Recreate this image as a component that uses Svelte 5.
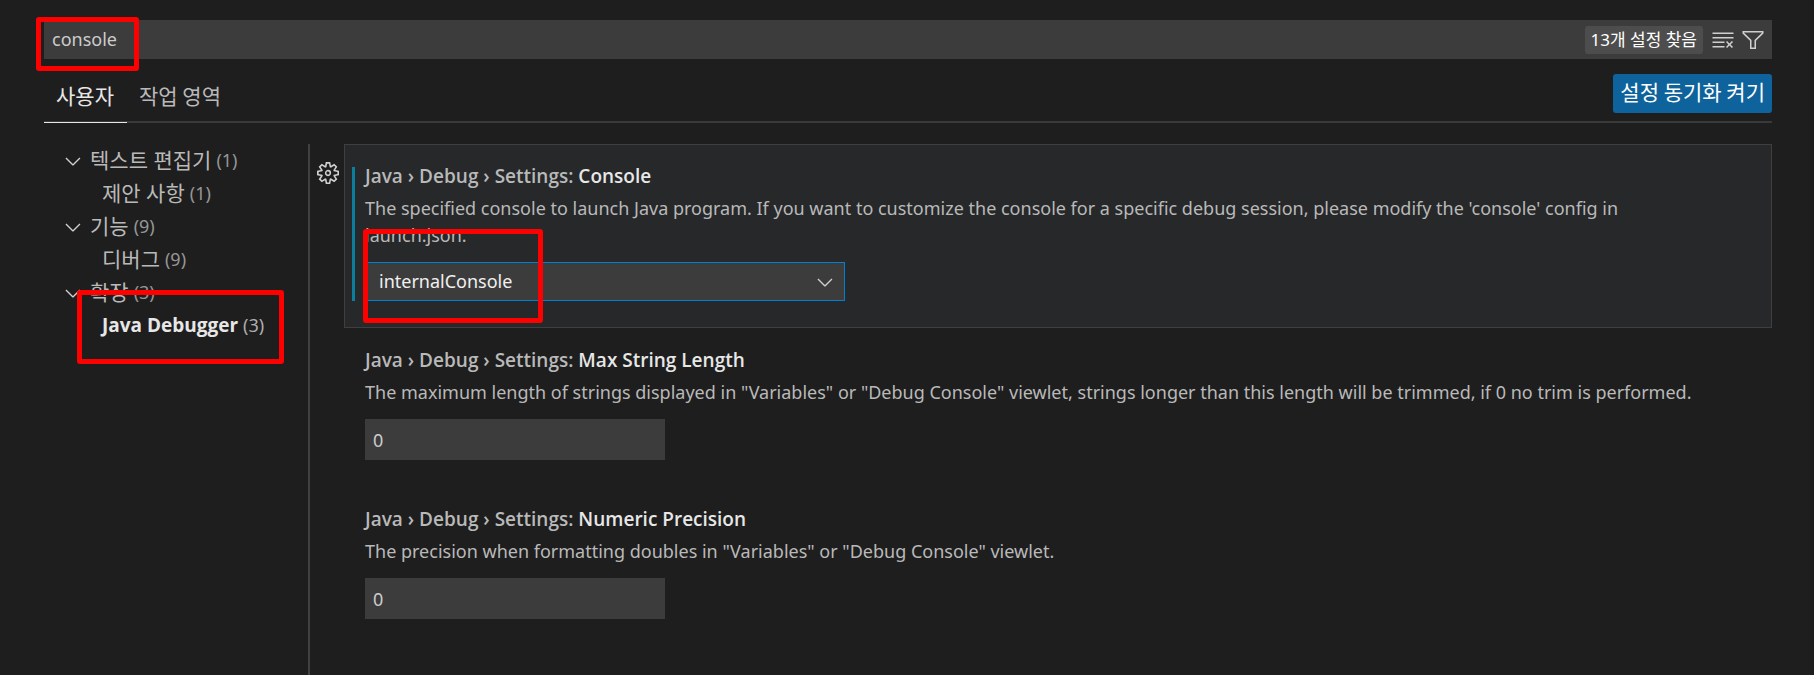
<script>
  let query = $state('console');
  let launchConsole = $state('internalConsole');

  const tree = [
    { label: '텍스트 편집기', count: 1, child: '제안 사항', childCount: 1 },
    { label: '기능', count: 9, child: '디버그', childCount: 9 },
    { label: '확장', count: 3, child: 'Java Debugger', childCount: 3, selected: true },
  ];

  const numberSettings = $state([
    {
      id: 'max-string-length',
      name: 'Max String Length',
      description:
        'The maximum length of strings displayed in "Variables" or "Debug Console" viewlet, strings longer than this length will be trimmed, if 0 no trim is performed.',
      value: '0',
    },
    {
      id: 'numeric-precision',
      name: 'Numeric Precision',
      description: 'The precision when formatting doubles in "Variables" or "Debug Console" viewlet.',
      value: '0',
    },
  ]);
</script>

{#snippet chevron()}
  <svg class="icon" viewBox="0 0 16 16" aria-hidden="true">
    <path d="M7.976 10.072l4.357-4.357.62.618L8.284 11h-.618L3 6.333l.619-.618 4.357 4.357z" />
  </svg>
{/snippet}

<div class="page">
  <header>
    <div class="search">
      <input type="text" aria-label="설정 검색" bind:value={query} />
      <span class="badge">13개 설정 찾음</span>
      <button class="tool" aria-label="검색 지우기">
        <svg class="icon" viewBox="0 0 16 16" aria-hidden="true">
          <path d="M10 12.6l.7.7 1.6-1.6 1.6 1.6.8-.7L13 11l1.7-1.6-.8-.8-1.6 1.7-1.6-1.7-.7.8 1.6 1.6-1.6 1.6zM1 4h14V3H1v1zm0 3h14V6H1v1zm8 2.5V9H1v1h8v-.5zM9 13v-1H1v1h8z" />
        </svg>
      </button>
      <button class="tool" aria-label="필터">
        <svg class="icon" viewBox="0 0 16 16" aria-hidden="true">
          <path d="M15 2v1.67l-5 4.759V14H6V8.429l-5-4.76V2h14zM7 8v5h2V8l5-4.76V3H2v.24L7 8z" />
        </svg>
      </button>
      <div class="mark mark-search"></div>
    </div>
    <div class="tabs">
      <button class="tab active">사용자</button>
      <button class="tab">작업 영역</button>
      <button class="sync">설정 동기화 켜기</button>
    </div>
  </header>

  <div class="body">
    <nav>
      {#each tree as group}
        <div class="row">
          {@render chevron()}
          <span class="label">{group.label}</span>
          <span class="count">({group.count})</span>
        </div>
        <div class="row child" class:selected={group.selected}>
          <span class="label">{group.child}</span>
          <span class="count">({group.childCount})</span>
          {#if group.selected}<div class="mark mark-tree"></div>{/if}
        </div>
      {/each}
    </nav>

    <main>
      <section class="focused">
        <button class="gear" aria-label="추가 작업">
          <svg viewBox="0 0 24 24" aria-hidden="true">
            <path fill-rule="evenodd" d="M19.85 8.75l4.15.83v4.84l-4.15.83 2.35 3.52-3.43 3.43-3.52-2.35-.83 4.15H9.58l-.83-4.15-3.52 2.35-3.43-3.43 2.35-3.52L0 14.42V9.58l4.15-.83L1.8 5.23 5.23 1.8l3.52 2.35L9.58 0h4.84l.83 4.15 3.52-2.35 3.43 3.43-2.35 3.52zm-1.57 5.07l4-.81v-2l-4-.81-.54-1.3 2.29-3.43-1.43-1.43-3.43 2.29-1.3-.54-.81-4h-2l-.81 4-1.3.54-3.43-2.29-1.43 1.43L6.38 8.9l-.54 1.3-4 .81v2l4 .81.54 1.3-2.29 3.43 1.43 1.43 3.43-2.29 1.3.54.81 4h2l.81-4 1.3-.54 3.43 2.29 1.43-1.43-2.29-3.43.54-1.3zm-8.186-4.672A3.43 3.43 0 0 1 12 8.57 3.44 3.44 0 0 1 15.43 12a3.43 3.43 0 1 1-5.336-2.852zm.956 4.274c.281.188.612.288.95.288A1.7 1.7 0 0 0 13.71 12a1.71 1.71 0 1 0-2.66 1.422z" />
          </svg>
        </button>
        <div class="modified"></div>
        <label class="title" for="console">Java › Debug › Settings: <b>Console</b></label>
        <p>The specified console to launch Java program. If you want to customize the console for a specific debug session, please modify the 'console' config in launch.json.</p>
        <div class="select">
          <select id="console" bind:value={launchConsole}>
            <option>internalConsole</option>
            <option>integratedTerminal</option>
            <option>externalTerminal</option>
          </select>
          {@render chevron()}
          <div class="mark mark-select"></div>
        </div>
      </section>

      {#each numberSettings as setting}
        <section>
          <label class="title" for={setting.id}>Java › Debug › Settings: <b>{setting.name}</b></label>
          <p>{setting.description}</p>
          <input id={setting.id} type="text" inputmode="numeric" bind:value={setting.value} />
        </section>
      {/each}
    </main>
  </div>
</div>

<style>
  :global(body) {
    margin: 0;
    background: #1e1e1e;
  }

  .page,
  .page * {
    box-sizing: border-box;
  }

  .page {
    display: flex;
    flex-direction: column;
    min-height: 100vh;
    padding: 20px 42px 0 44px;
    font-family: 'Noto Sans', 'Noto Sans CJK KR', sans-serif;
    font-size: 18px;
    line-height: 27px;
    color: #b9b9b9;
    background: #1e1e1e;
  }

  button,
  input,
  select {
    margin: 0;
    padding: 0;
    border: 0;
    outline: 0;
    border-radius: 0;
    font: inherit;
    color: inherit;
    background: none;
  }

  .icon {
    display: block;
    flex: none;
    width: 24px;
    height: 24px;
    fill: #d0d0d0;
  }

  .mark {
    position: absolute;
    border: 5px solid #ff0000;
    border-radius: 3px;
    pointer-events: none;
  }

  .search {
    position: relative;
    display: flex;
    align-items: center;
    height: 39px;
    padding: 0 7px 0 8px;
    background: #3c3c3c;
  }

  .search input {
    flex: 1;
    min-width: 0;
    color: #cccccc;
  }

  .badge {
    height: 28px;
    margin-right: 8px;
    padding: 0 6px;
    border-radius: 3px;
    font-size: 17px;
    line-height: 28px;
    color: #ffffff;
    background: #4d4d4d;
    white-space: nowrap;
  }

  .tool {
    margin-left: 6px;
  }

  .badge + .tool {
    margin-left: 0;
  }

  .mark-search {
    left: -8px;
    top: -3px;
    width: 103px;
    height: 54px;
  }

  .tabs {
    display: flex;
    align-items: flex-start;
    height: 64px;
    padding-top: 15px;
    border-bottom: 2px solid #3a3a3a;
    font-size: 21px;
  }

  .tab {
    height: 49px;
    padding: 0 13px 6px 12px;
    font-family: 'Noto Sans CJK KR', sans-serif;
  }

  .tab.active {
    color: #e7e7e7;
    border-bottom: 1px solid #e7e7e7;
    margin-bottom: -2px;
  }

  .sync {
    height: 39px;
    margin-left: auto;
    padding: 0 7px 4px;
    border-radius: 3px;
    font-family: 'Noto Sans CJK KR', sans-serif;
    color: #ffffff;
    background: #0e639c;
  }

  .body {
    flex: 1;
    display: flex;
    padding-top: 21px;
  }

  nav {
    flex: none;
    width: 266px;
    border-right: 2px solid #414141;
  }

  .row {
    position: relative;
    display: flex;
    align-items: center;
    height: 33px;
    padding-left: 17px;
    white-space: nowrap;
  }

  .row .label {
    margin-left: 5px;
    font-size: 21px;
  }

  .row .count {
    margin-left: 5px;
    color: #969696;
  }

  .row.child {
    padding-left: 53px;
  }

  .row.selected .label {
    font-family: 'Open Sans', sans-serif;
    font-size: 19px;
    font-weight: 700;
    color: #e7e7e7;
  }

  .row.selected .count {
    color: #aeaeae;
  }

  .mark-tree {
    left: 33px;
    top: -19px;
    width: 207px;
    height: 74px;
  }

  main {
    flex: 1;
    min-width: 0;
    padding-left: 34px;
  }

  section {
    position: relative;
    display: flex;
    flex-direction: column;
    align-items: flex-start;
    padding: 18px 64px 26px 20px;
    border: 1px solid transparent;
  }

  section.focused {
    border-color: #3f3f3f;
    background: #26282a;
  }

  .gear {
    position: absolute;
    left: -28px;
    top: 17px;
    width: 22px;
    height: 22px;
  }

  .gear svg {
    display: block;
    width: 22px;
    height: 22px;
    fill: #d0d0d0;
  }

  .modified {
    position: absolute;
    left: 7px;
    top: 22px;
    bottom: 26px;
    width: 3px;
    background: #0c7d9d;
  }

  .title {
    font-family: 'Open Sans', sans-serif;
    font-size: 19px;
    font-weight: 600;
  }

  .title b {
    font-weight: 600;
    color: #e7e7e7;
  }

  p {
    margin: 5px 0 13px;
  }

  section > input {
    width: 300px;
    height: 41px;
    padding: 0 8px;
    color: #cccccc;
    background: #3c3c3c;
  }

  .select {
    position: relative;
    width: 480px;
  }

  select {
    display: block;
    appearance: none;
    width: 100%;
    height: 39px;
    padding: 0 40px 0 13px;
    border: 1px solid #007fd4;
    color: #f0f0f0;
    background: #3c3c3c;
  }

  .select .icon {
    position: absolute;
    right: 8px;
    top: 8px;
    pointer-events: none;
  }

  .mark-select {
    left: -2px;
    top: -33px;
    width: 180px;
    height: 94px;
  }
</style>
